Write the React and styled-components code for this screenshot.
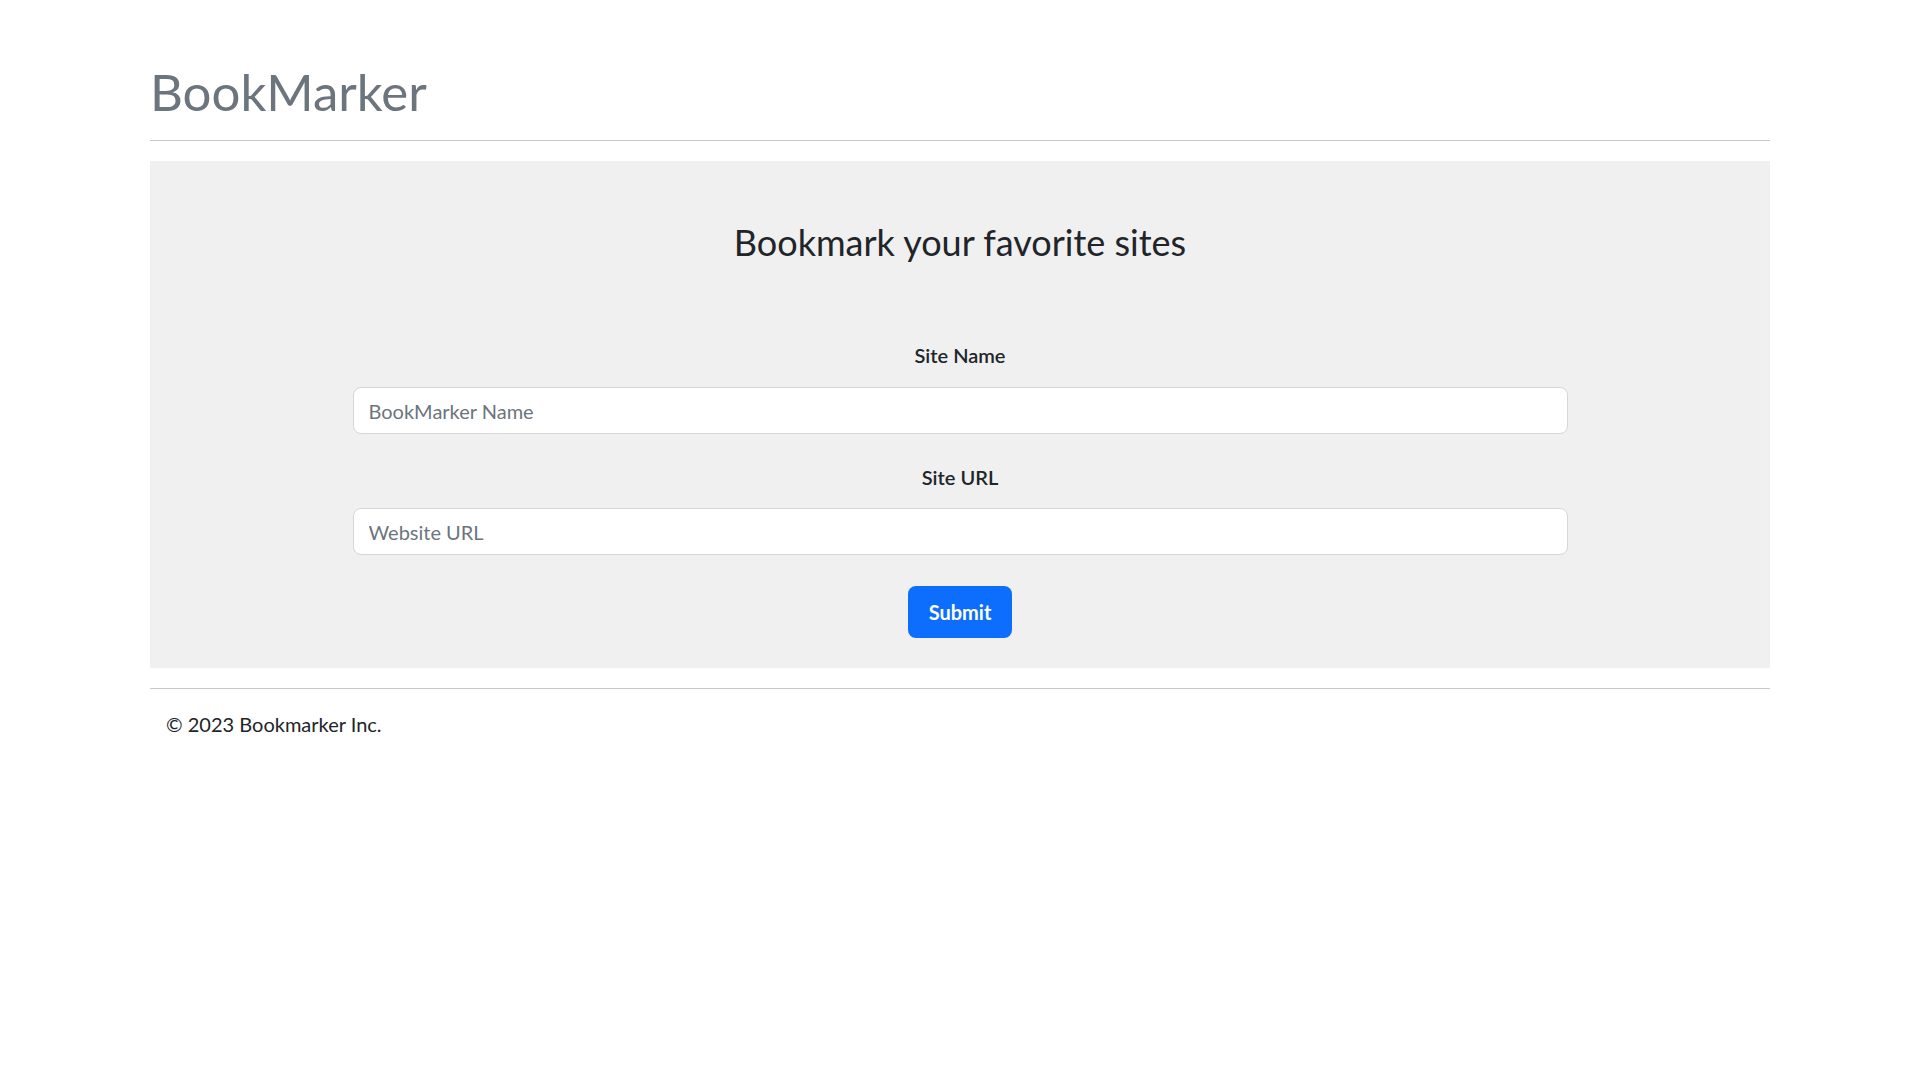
import React from "react"
import styled, { createGlobalStyle } from "styled-components"

const GlobalStyle = createGlobalStyle`
    body {
        margin: 0;
        background: #fff;
        color: #212529;
        font-family: "Segoe UI", Lato, "Noto Sans", sans-serif;
    }
    * { box-sizing: border-box; }
`

const Container = styled.div`
    width: 1620px;
    margin: 0 auto;
`

const Header = styled.header`
    padding: 61px 0 18px;
    border-bottom: 1px solid #c8c9ca;
`

const Brand = styled.h1`
    margin: 0;
    font-size: 51px;
    font-weight: 400;
    line-height: 1.2;
    color: #6c757d;
`

const Panel = styled.section`
    margin-top: 20px;
    background-color: #f0f0f0;
    padding: 60px 0 30px;
    text-align: center;
`

const Heading = styled.h2`
    margin: 0 0 76px;
    font-size: 36px;
    font-weight: 400;
    line-height: 1.2;
`

const Form = styled.form`
    width: 75%;
    margin: 0 auto;
    display: flex;
    flex-direction: column;
    align-items: center;
`

const Label = styled.label`
    display: block;
    font-size: 20px;
    font-weight: 600;
    line-height: 1.5;
    margin-bottom: ${p => p.$gap}px;
`

const Input = styled.input`
    width: 100%;
    height: 47px;
    padding: 0 15px;
    font-family: inherit;
    font-size: 20px;
    color: #212529;
    background: #fff;
    border: 1px solid #d3d6dc;
    border-radius: 8px;
    margin-bottom: ${p => p.$after}px;
    outline: none;

    &::placeholder {
        color: #6c757d;
    }
`

const Button = styled.button`
    height: 52px;
    padding: 0 21px;
    font-family: inherit;
    font-size: 20px;
    font-weight: 700;
    color: #fff;
    background-color: #0d6efd;
    border: 0;
    border-radius: 8px;
    cursor: pointer;
`

const Footer = styled.footer`
    border-top: 1px solid #c8c9ca;
    margin-top: 20px;
    padding: 20px 16px;
    font-size: 20px;
    line-height: 1.5;
`

export default function App() {
    return (
        <Container>
            <GlobalStyle />
            <Header>
                <Brand>BookMarker</Brand>
            </Header>
            <Panel>
                <Heading>Bookmark your favorite sites</Heading>
                <Form onSubmit={e => e.preventDefault()}>
                    <Label htmlFor="siteName" $gap={17}>Site Name</Label>
                    <Input id="siteName" type="text" placeholder="BookMarker Name" $after={28} />
                    <Label htmlFor="siteUrl" $gap={16}>Site URL</Label>
                    <Input id="siteUrl" type="text" placeholder="Website URL" $after={31} />
                    <Button type="submit">Submit</Button>
                </Form>
            </Panel>
            <Footer>© 2023 Bookmarker Inc.</Footer>
        </Container>
    )
}
